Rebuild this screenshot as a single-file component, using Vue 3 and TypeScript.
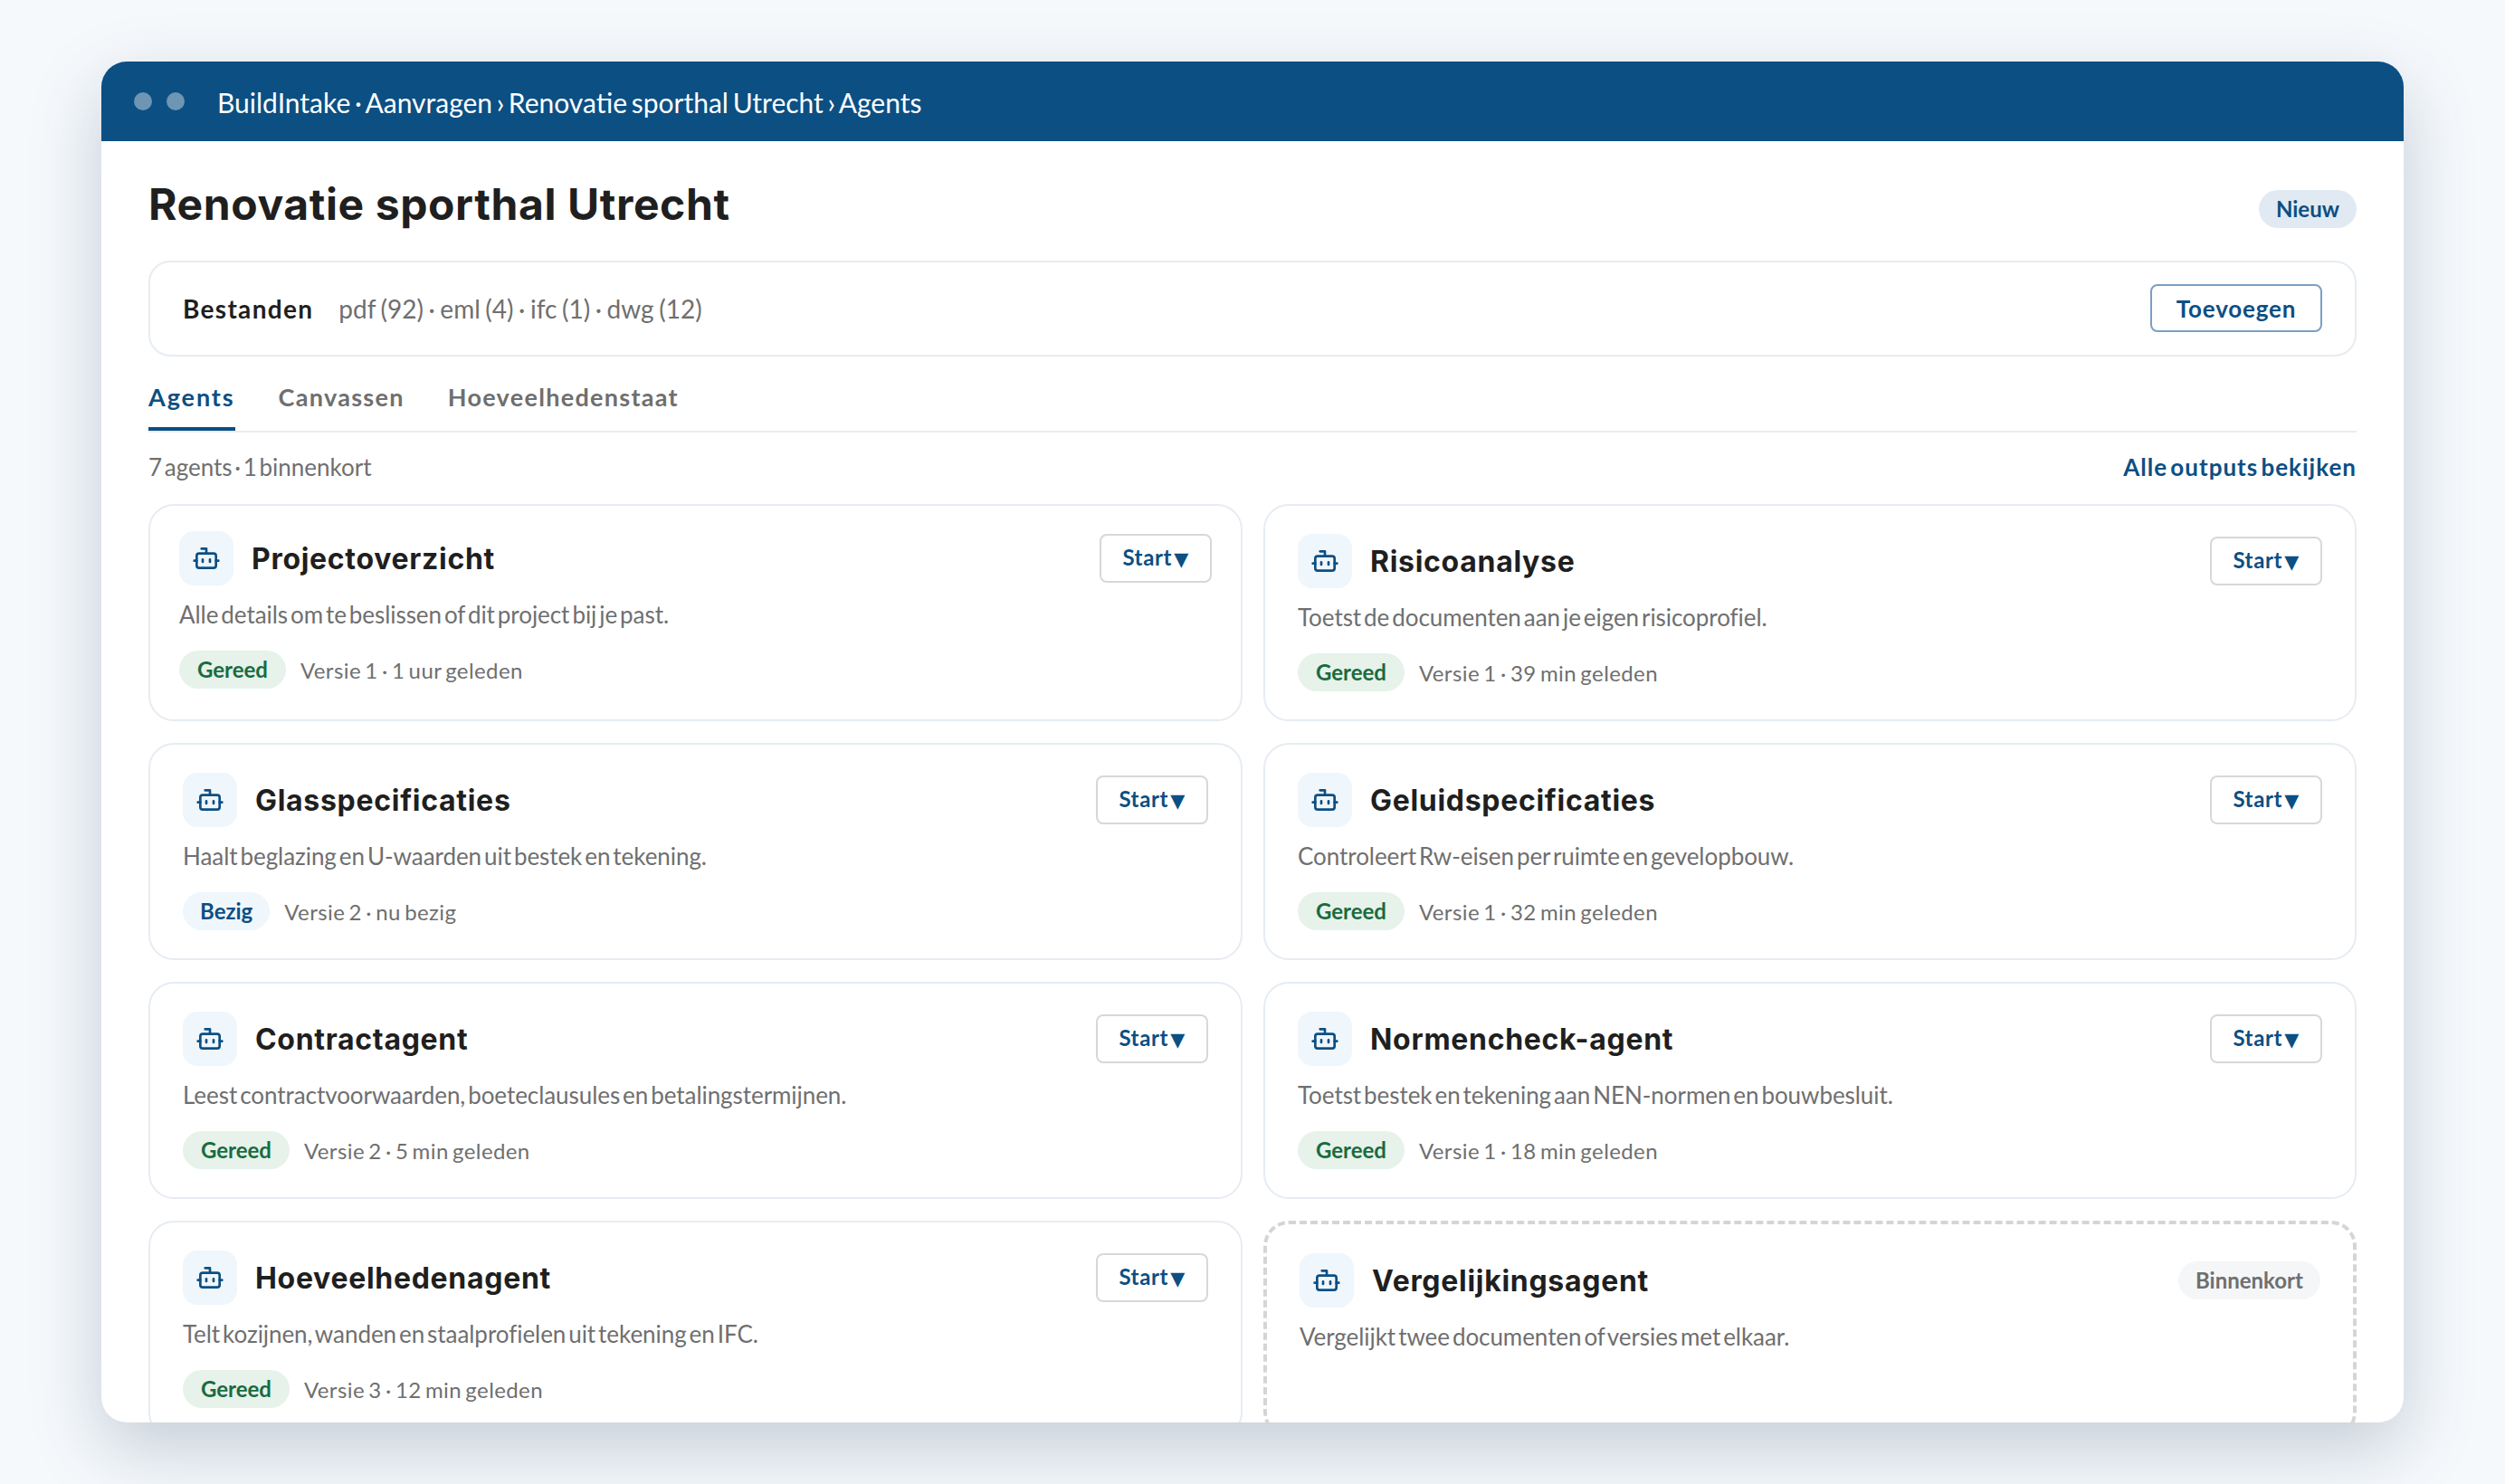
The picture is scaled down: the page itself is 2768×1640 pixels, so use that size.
<script setup lang="ts">
type Agent = {
  name: string
  desc: string
  status?: 'Gereed' | 'Bezig'
  meta?: string
  soon?: boolean
  tight?: boolean
}

const tabs = ['Agents', 'Canvassen', 'Hoeveelhedenstaat']

const agents: Agent[] = [
  { name: 'Projectoverzicht', desc: 'Alle details om te beslissen of dit project bij je past.', status: 'Gereed', meta: 'Versie 1 · 1 uur geleden', tight: true },
  { name: 'Risicoanalyse', desc: 'Toetst de documenten aan je eigen risicoprofiel.', status: 'Gereed', meta: 'Versie 1 · 39 min geleden' },
  { name: 'Glasspecificaties', desc: 'Haalt beglazing en U-waarden uit bestek en tekening.', status: 'Bezig', meta: 'Versie 2 · nu bezig' },
  { name: 'Geluidspecificaties', desc: 'Controleert Rw-eisen per ruimte en gevelopbouw.', status: 'Gereed', meta: 'Versie 1 · 32 min geleden' },
  { name: 'Contractagent', desc: 'Leest contractvoorwaarden, boeteclausules en betalingstermijnen.', status: 'Gereed', meta: 'Versie 2 · 5 min geleden' },
  { name: 'Normencheck-agent', desc: 'Toetst bestek en tekening aan NEN-normen en bouwbesluit.', status: 'Gereed', meta: 'Versie 1 · 18 min geleden' },
  { name: 'Hoeveelhedenagent', desc: 'Telt kozijnen, wanden en staalprofielen uit tekening en IFC.', status: 'Gereed', meta: 'Versie 3 · 12 min geleden' },
  { name: 'Vergelijkingsagent', desc: 'Vergelijkt twee documenten of versies met elkaar.', soon: true }
]
</script>

<template>
  <div class="page">
    <div class="window">
      <header class="topbar">
        <span class="dot"></span>
        <span class="dot"></span>
        <span class="crumbs">BuildIntake · Aanvragen › Renovatie sporthal Utrecht › Agents</span>
      </header>

      <main class="content">
        <div class="title-row">
          <h1>Renovatie sporthal Utrecht</h1>
          <span class="pill pill-new">Nieuw</span>
        </div>

        <section class="files">
          <strong>Bestanden</strong>
          <span class="files-list">pdf (92) · eml (4) · ifc (1) · dwg (12)</span>
          <button class="btn-add">Toevoegen</button>
        </section>

        <nav class="tabs">
          <a v-for="(tab, idx) in tabs" :key="tab" class="tab" :class="{ active: idx === 0 }">{{ tab }}</a>
        </nav>

        <div class="summary">
          <span>7 agents · 1 binnenkort</span>
          <a class="all-link">Alle outputs bekijken</a>
        </div>

        <div class="grid">
          <article
            v-for="agent in agents"
            :key="agent.name"
            class="card"
            :class="{ tight: agent.tight, soon: agent.soon }"
          >
            <div class="card-head">
              <span class="tile">
                <svg viewBox="0 0 24 24" width="32" height="32" fill="none" stroke="currentColor" stroke-width="2" stroke-linecap="round" stroke-linejoin="round">
                  <path d="M12 8V4H8" />
                  <rect x="4" y="8" width="16" height="12" rx="2" />
                  <path d="M2 14h2M20 14h2M15 13v2M9 13v2" />
                </svg>
              </span>
              <h2>{{ agent.name }}</h2>
              <span v-if="agent.soon" class="pill pill-soon">Binnenkort</span>
              <button v-else class="btn-start">Start<span class="caret">▾</span></button>
            </div>
            <p class="desc">{{ agent.desc }}</p>
            <div v-if="agent.status" class="card-foot">
              <span class="pill" :class="agent.status === 'Gereed' ? 'pill-done' : 'pill-busy'">{{ agent.status }}</span>
              <span class="meta">{{ agent.meta }}</span>
            </div>
          </article>
        </div>
      </main>
    </div>
  </div>
</template>

<style>
html, body { margin: 0; background: #f6f9fc; }
</style>

<style scoped>
.page {
  height: 1640px;
  box-sizing: border-box;
  padding: 68px 112px;
  overflow: hidden;
  background: #f6f9fc;
  font-family: Lato, "Liberation Sans", sans-serif;
  color: #1f1f1f;
}

.window {
  height: 1504px;
  background: #fff;
  border-radius: 28px;
  overflow: hidden;
  box-shadow: 0 28px 80px rgba(20, 50, 80, 0.22);
}

.topbar {
  height: 88px;
  box-sizing: border-box;
  padding: 0 36px;
  display: flex;
  align-items: center;
  gap: 16px;
  background: #0c4f83;
  color: #fff;
}
.dot { width: 20px; height: 20px; border-radius: 50%; background: rgba(255, 255, 255, 0.4); }
.crumbs { margin-left: 20px; font-size: 30px; word-spacing: -3px; line-height: 38px; padding-top: 2px; }

.content { padding: 40px 52px 0; }

.title-row {
  display: flex;
  justify-content: space-between;
  align-items: center;
  height: 60px;
  margin-bottom: 32px;
}
h1 {
  margin: 0;
  font-family: Inter, sans-serif;
  font-size: 48px;
  font-weight: 700;
  letter-spacing: 0.6px;
  line-height: 60px;
}

.pill {
  display: inline-flex;
  align-items: center;
  height: 42px;
  box-sizing: border-box;
  padding: 0 19px 2px;
  border-radius: 21px;
  font-size: 24px;
  font-weight: 700;
  white-space: nowrap;
}
.pill-new { background: #e1eaf2; color: #0c4f83; transform: translateY(5px); }
.pill-done { background: #e6f2ea; color: #1a6b3f; padding-left: 20px; padding-right: 20px; }
.pill-busy { background: #eff6fc; color: #0c4f83; }
.pill-soon { background: #f4f6f8; color: #6f6f6f; margin-left: auto; }

.files {
  display: flex;
  align-items: center;
  gap: 28px;
  padding: 24px 36px 25px;
  border: 2px solid #e6ecf2;
  border-radius: 24px;
}
.files strong { font-size: 28px; font-weight: 700; letter-spacing: 1.3px; }
.files-list { font-size: 28px; color: #6f6f6f; word-spacing: -1.6px; }

button {
  box-sizing: border-box;
  background: #fff;
  border-radius: 8px;
  font-family: inherit;
  font-weight: 700;
  color: #0c4f83;
}
.btn-add {
  height: 53px;
  margin-left: auto;
  width: 190px;
  border: 2px solid #7aa0c4;
  font-size: 26px;
  letter-spacing: 0.8px;
}
.btn-start {
  display: flex;
  align-items: center;
  justify-content: center;
  height: 54px;
  margin-left: auto;
  width: 124px;
  padding: 0 0 3px;
  border: 2px solid #d5d8dc;
  font-size: 24px;
  letter-spacing: 0.6px;
}
.caret { font-size: 29px; line-height: 1; margin-left: 3px; }

.tabs {
  display: flex;
  gap: 48px;
  margin-top: 23px;
  border-bottom: 2px solid #e6ecf2;
}
.tab {
  height: 59px;
  box-sizing: border-box;
  line-height: 43px;
  font-size: 27px;
  font-weight: 700;
  letter-spacing: 1.3px;
  color: #6f6f6f;
}
.tab.active { color: #0c4f83; border-bottom: 4px solid #0c4f83; letter-spacing: 1.9px; }

.summary {
  display: flex;
  justify-content: space-between;
  align-items: center;
  height: 40px;
  margin: 18px 0 21px;
  font-size: 26px;
  color: #6f6f6f;
  word-spacing: -4px;
}
.all-link { font-weight: 700; color: #0c4f83; letter-spacing: 1px; }

.grid {
  display: grid;
  grid-template-columns: 1209px 1208px;
  gap: 24px 23px;
}

.card {
  box-sizing: border-box;
  padding: 31px 36px;
  border: 2px solid #e6ecf2;
  border-radius: 28px;
}
.card.tight { padding: 28px 32px; }
.card.soon { border: 4px dashed #d5d5d5; padding: 32px 36px; }

.card-head { display: flex; align-items: center; gap: 20px; }
.tile {
  display: flex;
  align-items: center;
  justify-content: center;
  width: 60px;
  height: 60px;
  flex: none;
  border-radius: 16px;
  background: #eff6fc;
  color: #0c4f83;
}
h2 {
  margin: 0;
  font-family: Inter, sans-serif;
  font-size: 32px;
  font-weight: 700;
  letter-spacing: 0.7px;
}

.desc {
  margin: 14px 0 0;
  font-size: 26px;
  line-height: 36px;
  color: #6f6f6f;
  word-spacing: -3.6px;
  letter-spacing: -0.06px;
}

.card-foot { display: flex; align-items: center; gap: 16px; margin-top: 22px; }
.meta { font-size: 24px; color: #6f6f6f; letter-spacing: 0.4px; word-spacing: -2.2px; }
</style>
